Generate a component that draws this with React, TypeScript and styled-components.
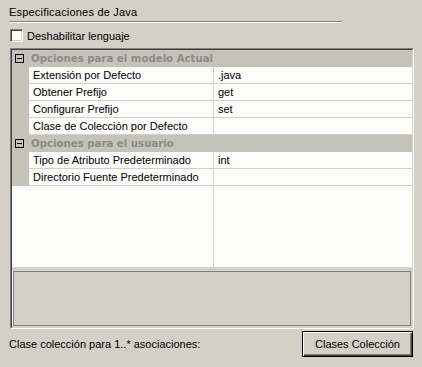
import React from "react";
import styled, { createGlobalStyle } from "styled-components";

const GlobalStyle = createGlobalStyle`
  * { box-sizing: border-box; }
  body {
    margin: 0;
    background: #d4d0c8;
    font-family: "Liberation Sans", Tahoma, Arial, sans-serif;
    font-size: 11px;
    color: #000;
  }
`;

type Prop = { name: string; value: string };
type Category = { title: string; props: Prop[] };

const categories: Category[] = [
  {
    title: "Opciones para el modelo Actual",
    props: [
      { name: "Extensión por Defecto", value: ".java" },
      { name: "Obtener Prefijo", value: "get" },
      { name: "Configurar Prefijo", value: "set" },
      { name: "Clase de Colección por Defecto", value: "" },
    ],
  },
  {
    title: "Opciones para el usuario",
    props: [
      { name: "Tipo de Atributo Predeterminado", value: "int" },
      { name: "Directorio Fuente Predeterminado", value: "" },
    ],
  },
];

const App = () => (
  <>
    <GlobalStyle />
    <Page>
      <Header>
        <Title>Especificaciones de Java</Title>
        <Rule />
      </Header>

      <CheckRow>
        <CheckBox />
        <span>Deshabilitar lenguaje</span>
      </CheckRow>

      <GridFrame>
        <GridInner>
          <Rows>
            {categories.map(function renderCategory(cat) {
              return (
                <React.Fragment key={cat.title}>
                  <CategoryRow>
                    <Toggle />
                    <CategoryTitle>{cat.title}</CategoryTitle>
                  </CategoryRow>
                  {cat.props.map(function renderProp(p) {
                    return (
                      <PropRow key={p.name}>
                        <Gutter />
                        <NameCell>{p.name}</NameCell>
                        <ValueCell>{p.value}</ValueCell>
                      </PropRow>
                    );
                  })}
                </React.Fragment>
              );
            })}
          </Rows>
          <Filler>
            <FillerLeft />
            <div />
          </Filler>
          <Description />
        </GridInner>
      </GridFrame>

      <Footer>
        <span>Clase colección para 1..* asociaciones:</span>
        <Button>Clases Colección</Button>
      </Footer>
    </Page>
  </>
);

export default App;

const Page = styled.div`
  width: 422px;
  height: 367px;
  display: flex;
  flex-direction: column;
`;

const Header = styled.div`
  padding: 6px 0 0 9px;
`;

const Title = styled.div`
  line-height: 13px;
  letter-spacing: 0.2px;
`;

const Rule = styled.div`
  width: 333px;
  margin-top: 2px;
  border-top: 1px solid #808080;
  border-bottom: 1px solid #ffffff;
`;

const CheckRow = styled.div`
  display: flex;
  align-items: center;
  gap: 4px;
  margin: 6px 0 0 10px;
  height: 13px;
`;

const CheckBox = styled.div`
  width: 13px;
  height: 13px;
  background: #ffffff;
  border-style: solid;
  border-width: 1px;
  border-color: #808080 #ffffff #ffffff #808080;
  box-shadow: inset 1px 1px #404040, inset -1px -1px #d4d0c8;
`;

const GridFrame = styled.div`
  margin: 6px 0 0 10px;
  width: 404px;
  height: 281px;
  border-style: solid;
  border-width: 1px;
  border-color: #808080 #ffffff #ffffff #808080;
`;

const GridInner = styled.div`
  height: 100%;
  display: flex;
  flex-direction: column;
  border-style: solid;
  border-width: 1px;
  border-color: #404040 #d4d0c8 #d4d0c8 #404040;
  background: #d4d0c8;
`;

const Rows = styled.div`
  background: #fcfcfa;
`;

const CategoryRow = styled.div`
  height: 17px;
  display: flex;
  align-items: center;
  background: #c5c2ba;
`;

const Toggle = styled.div`
  position: relative;
  width: 9px;
  height: 9px;
  margin: 0 7px 0 3px;
  border: 1px solid #000;

  &::after {
    content: "";
    position: absolute;
    left: 1px;
    top: 3px;
    width: 5px;
    height: 1px;
    background: #000;
  }
`;

const CategoryTitle = styled.span`
  font-family: "DejaVu Sans", "Liberation Sans", sans-serif;
  font-size: 10.2px;
  font-weight: bold;
  color: #8d8b86;
`;

const PropRow = styled.div`
  height: 17px;
  display: grid;
  grid-template-columns: 17px 185px 1fr;
`;

const Gutter = styled.div`
  background: #c5c2ba;
`;

const NameCell = styled.div`
  padding: 2px 0 0 4px;
  border-bottom: 1px solid #d4d0c8;
  border-right: 1px solid #d4d0c8;
  white-space: nowrap;
`;

const ValueCell = styled.div`
  padding: 2px 0 0 4px;
  border-bottom: 1px solid #d4d0c8;
`;

const Filler = styled.div`
  flex: 1;
  display: grid;
  grid-template-columns: 202px 1fr;
  background: #fcfcfa;
`;

const FillerLeft = styled.div`
  border-right: 1px solid #d4d0c8;
`;

const Description = styled.div`
  height: 55px;
  margin: 4px 1px 1px 1px;
  border: 1px solid #808080;
  box-shadow: -1px 0 #ffffff;
`;

const Footer = styled.div`
  margin-top: 2px;
  padding: 0 9px;
  display: flex;
  align-items: center;
  justify-content: space-between;
`;

const Button = styled.div`
  width: 111px;
  height: 26px;
  display: flex;
  align-items: center;
  justify-content: center;
  border: 1px solid #000;
  background: #d4d0c8;
  box-shadow: inset 1px 1px #ffffff, inset -1px -1px #404040,
    inset -2px -2px #808080;
`;
